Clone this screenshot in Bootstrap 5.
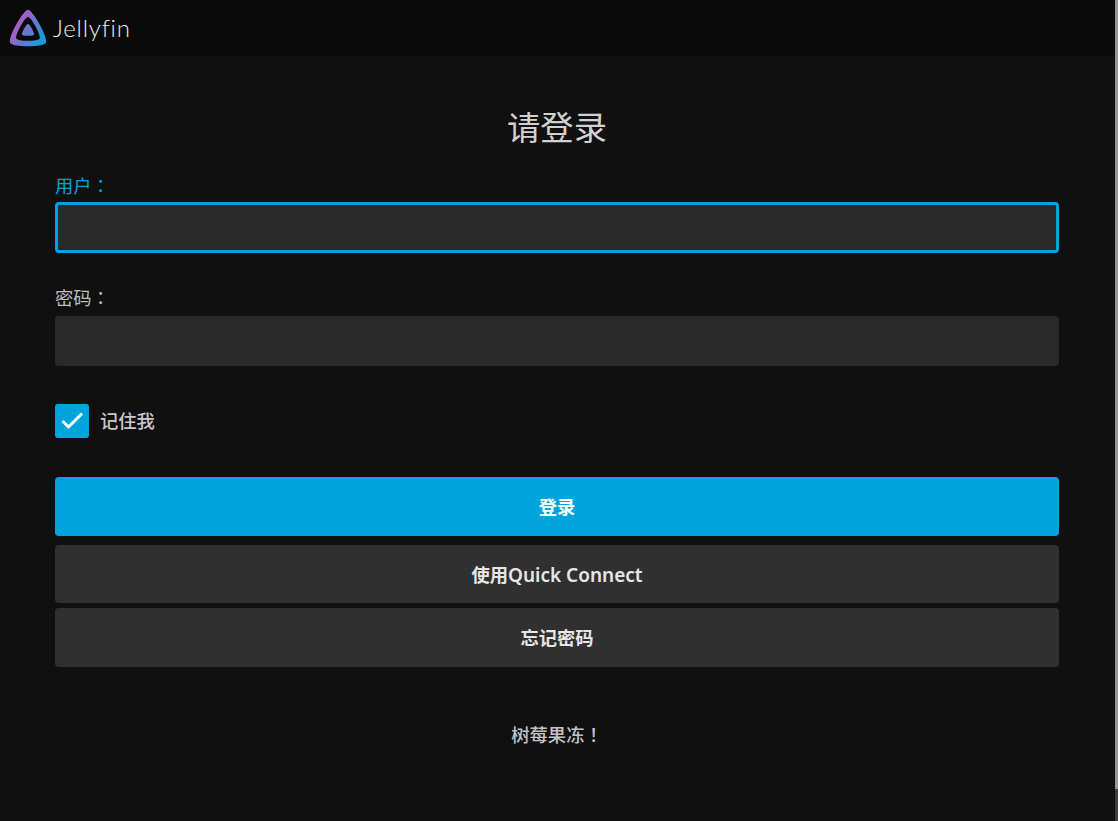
<!DOCTYPE html>
<html lang="zh">

<head>
  <meta charset="UTF-8">
  <meta name="viewport" content="width=device-width, initial-scale=1.0">
  <title>Jellyfin</title>
  <link href="https://cdn.jsdelivr.net/npm/bootstrap@5.3.0/dist/css/bootstrap.min.css" rel="stylesheet">
  <style>
    html, body {
      height: 100%;
      overflow: hidden;
    }

    body {
      background-color: #101010;
      color: #d1d1d1;
      font-family: "Noto Sans", "Noto Sans CJK TC", sans-serif;
      position: relative;
    }

    .app-header {
      height: 56px;
      background-color: #0a0a0a;
      padding-left: 8px;
      gap: 5px;
    }

    .app-name {
      font-family: Lato, "Noto Sans", sans-serif;
      font-weight: 300;
      font-size: 24px;
      color: #ececec;
      letter-spacing: 0.8px;
    }

    .login-wrap {
      padding: 0 59px 0 55px;
    }

    .login-title {
      font-size: 33.3px;
      font-weight: 400;
      line-height: 44px;
      margin: 49px 0 24px;
      color: #d1d1d1;
    }

    .field-label {
      font-family: "Noto Sans CJK TC", sans-serif;
      font-feature-settings: "locl" 0;
      font-size: 18.3px;
      line-height: 24px;
      margin-bottom: 7px;
      display: block;
      color: #bdbdbd;
    }

    .field-label.is-active {
      color: #00a4dc;
      margin-bottom: 5px;
    }

    .field-input.form-control {
      height: 50px;
      background-color: #292929;
      border: 0;
      border-radius: 4px;
      color: #fff;
    }

    .field-input.is-active {
      height: 51px;
      border: 3px solid #00a4dc;
    }

    .field-block {
      margin-bottom: 32px;
    }

    .remember-box {
      width: 34px;
      height: 34px;
      background-color: #00a4dc;
      border-radius: 3px;
    }

    .remember-row {
      margin-top: 38px;
      margin-bottom: 39px;
      gap: 11px;
      font-size: 18.3px;
      font-weight: 500;
      color: #c8c8c8;
    }

    .action-btn.btn {
      height: 59px;
      border: 0;
      border-radius: 4px;
      font-size: 18.3px;
      font-weight: 600;
      color: #e6e6e6;
      background-color: #303030;
    }

    .action-btn.btn-main {
      background-color: #00a4dc;
      color: #fff;
    }

    .action-btn.btn-short {
      height: 58px;
      padding-top: 8px;
    }

    .latin-part {
      font-size: 19px;
    }

    .gap-one {
      margin-bottom: 9px;
    }

    .gap-two {
      margin-bottom: 5px;
    }

    .disclaimer {
      margin-top: 55px;
      font-family: "Noto Sans CJK TC", sans-serif;
      font-feature-settings: "locl" 0;
      font-size: 18.3px;
      font-weight: 500;
      line-height: 24px;
      color: #c4c4c4;
    }

    .scroll-track {
      position: absolute;
      top: 0;
      right: 0;
      bottom: 0;
      width: 3px;
      background-color: #3e3e3e;
    }

    .scroll-thumb {
      height: 789px;
      background-color: #969696;
    }
  </style>
</head>

<body>
  <header class="app-header d-flex align-items-center">
    <svg width="40" height="40" viewBox="0 0 512 512" aria-label="Jellyfin logo">
      <defs>
        <linearGradient id="jfGrad" gradientUnits="userSpaceOnUse" x1="110.25" y1="213.3" x2="496.14" y2="436.09">
          <stop offset="0" stop-color="#aa5cc3" />
          <stop offset="1" stop-color="#00a4dc" />
        </linearGradient>
      </defs>
      <path fill="url(#jfGrad)" d="M256,201.62c-20.44,0-86.23,119.29-76.2,139.43s142.48,19.92,152.4,0S276.47,201.63,256,201.62Z" />
      <path fill="url(#jfGrad)" d="M256,23.3c-61.56,0-259.82,359.5-229.59,420.2s429.34,60,459.24,0S317.61,23.3,256,23.3ZM406.51,390.76c-19.59,39.33-281.08,39.77-300.9,0S215.71,115.48,256.06,115.48,426.1,351.44,406.51,390.76Z" />
    </svg>
    <span class="app-name">Jellyfin</span>
  </header>

  <main class="login-wrap">
    <h1 class="login-title text-center">请登录</h1>

    <form>
      <div class="field-block">
        <label class="field-label is-active" for="txtUser">用户：</label>
        <input id="txtUser" class="form-control field-input is-active" type="text">
      </div>
      <div>
        <label class="field-label" for="txtPassword">密码：</label>
        <input id="txtPassword" class="form-control field-input" type="password">
      </div>

      <div class="remember-row d-flex align-items-center">
        <span class="remember-box d-flex align-items-center justify-content-center">
          <svg width="24" height="24" viewBox="0 0 24 24">
            <path d="M2.5 12 L8.5 18 L22 4.5" fill="none" stroke="#fff" stroke-width="3" />
          </svg>
        </span>
        <span>记住我</span>
      </div>

      <button type="button" class="btn action-btn btn-main w-100 d-block gap-one">登录</button>
      <button type="button" class="btn action-btn btn-short w-100 d-block gap-two">使用<span class="latin-part">Quick Connect</span></button>
      <button type="button" class="btn action-btn w-100 d-block">忘记密码</button>
    </form>

    <p class="disclaimer text-center">树莓果冻！</p>
  </main>

  <div class="scroll-track">
    <div class="scroll-thumb"></div>
  </div>

  <script src="https://cdn.jsdelivr.net/npm/bootstrap@5.3.0/dist/js/bootstrap.bundle.min.js"></script>
</body>

</html>
